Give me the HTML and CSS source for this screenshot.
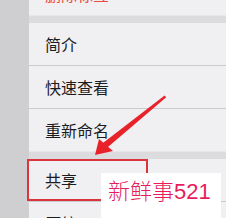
FILE: index.html
```html
<!DOCTYPE html>
<html lang="zh">
<head>
<meta charset="utf-8">
<link rel="stylesheet" href="styles.css">
</head>
<body>
<div class="page">
  <div class="strip"></div>
  <div class="panel">
    <div class="row-top"><div class="danger">删除标签</div></div>
    <div class="band"></div>
    <div class="row">简介</div>
    <div class="row">快速查看</div>
    <div class="row last">重新命名</div>
    <div class="band"></div>
    <div class="row">共享</div>
    <div class="row">压缩</div>
  </div>
  <div class="highlight"></div>
  <div class="watermark">新鲜事521</div>
  <svg class="arrow" width="226" height="218" viewBox="0 0 226 218">
    <polygon points="164.6,95.4 166.2,97.2 106.5,148.2 102,143.8" fill="#e8222b"/>
    <polygon points="95,155 99,139 113,151" fill="#e8222b"/>
  </svg>
</div>
</body>
</html>
```
FILE: styles.css
```css
html, body {
  margin: 0;
  padding: 0;
}
body {
  width: 226px;
  height: 218px;
  overflow: hidden;
  background: #cfcfd2;
  font-family: "Noto Sans CJK SC", "Liberation Sans", sans-serif;
}
.page {
  position: relative;
  display: flex;
  width: 226px;
  height: 218px;
  overflow: hidden;
}
.strip {
  width: 29px;
  flex: none;
  background: #cfcfd2;
}
.panel {
  flex: 1;
  background: #f0f0f2;
  display: flex;
  flex-direction: column;
  overflow: hidden;
}
.row-top {
  height: 15px;
  overflow: hidden;
  flex: none;
}
.danger {
  margin-top: -14px;
  padding-left: 16px;
  font-size: 16px;
  line-height: 16px;
  color: #ee4a44;
}
.band {
  flex: none;
  height: 7px;
  background: #dcdcdf;
  border-top: 1px solid #e7e7e9;
}
.row {
  flex: none;
  height: 42px;
  padding-left: 16px;
  display: flex;
  align-items: center;
  font-size: 16px;
  color: #1c1c1e;
  border-bottom: 1px solid #cbcbcd;
}
.row.last {
  border-bottom: none;
}
.highlight {
  position: absolute;
  left: 27px;
  top: 159px;
  width: 117px;
  height: 38px;
  border: 2px solid #d8353d;
}
.watermark {
  position: absolute;
  left: 101px;
  top: 173px;
  width: 113px;
  height: 37px;
  padding: 8px 0 0 7px;
  background: #ffffff;
  color: #e81c5c;
  font-family: "Liberation Sans", "Noto Sans CJK SC", sans-serif;
  font-size: 22px;
  line-height: 22px;
  font-weight: 300;
  white-space: nowrap;
}
.arrow {
  position: absolute;
  left: 0;
  top: 0;
}
```
